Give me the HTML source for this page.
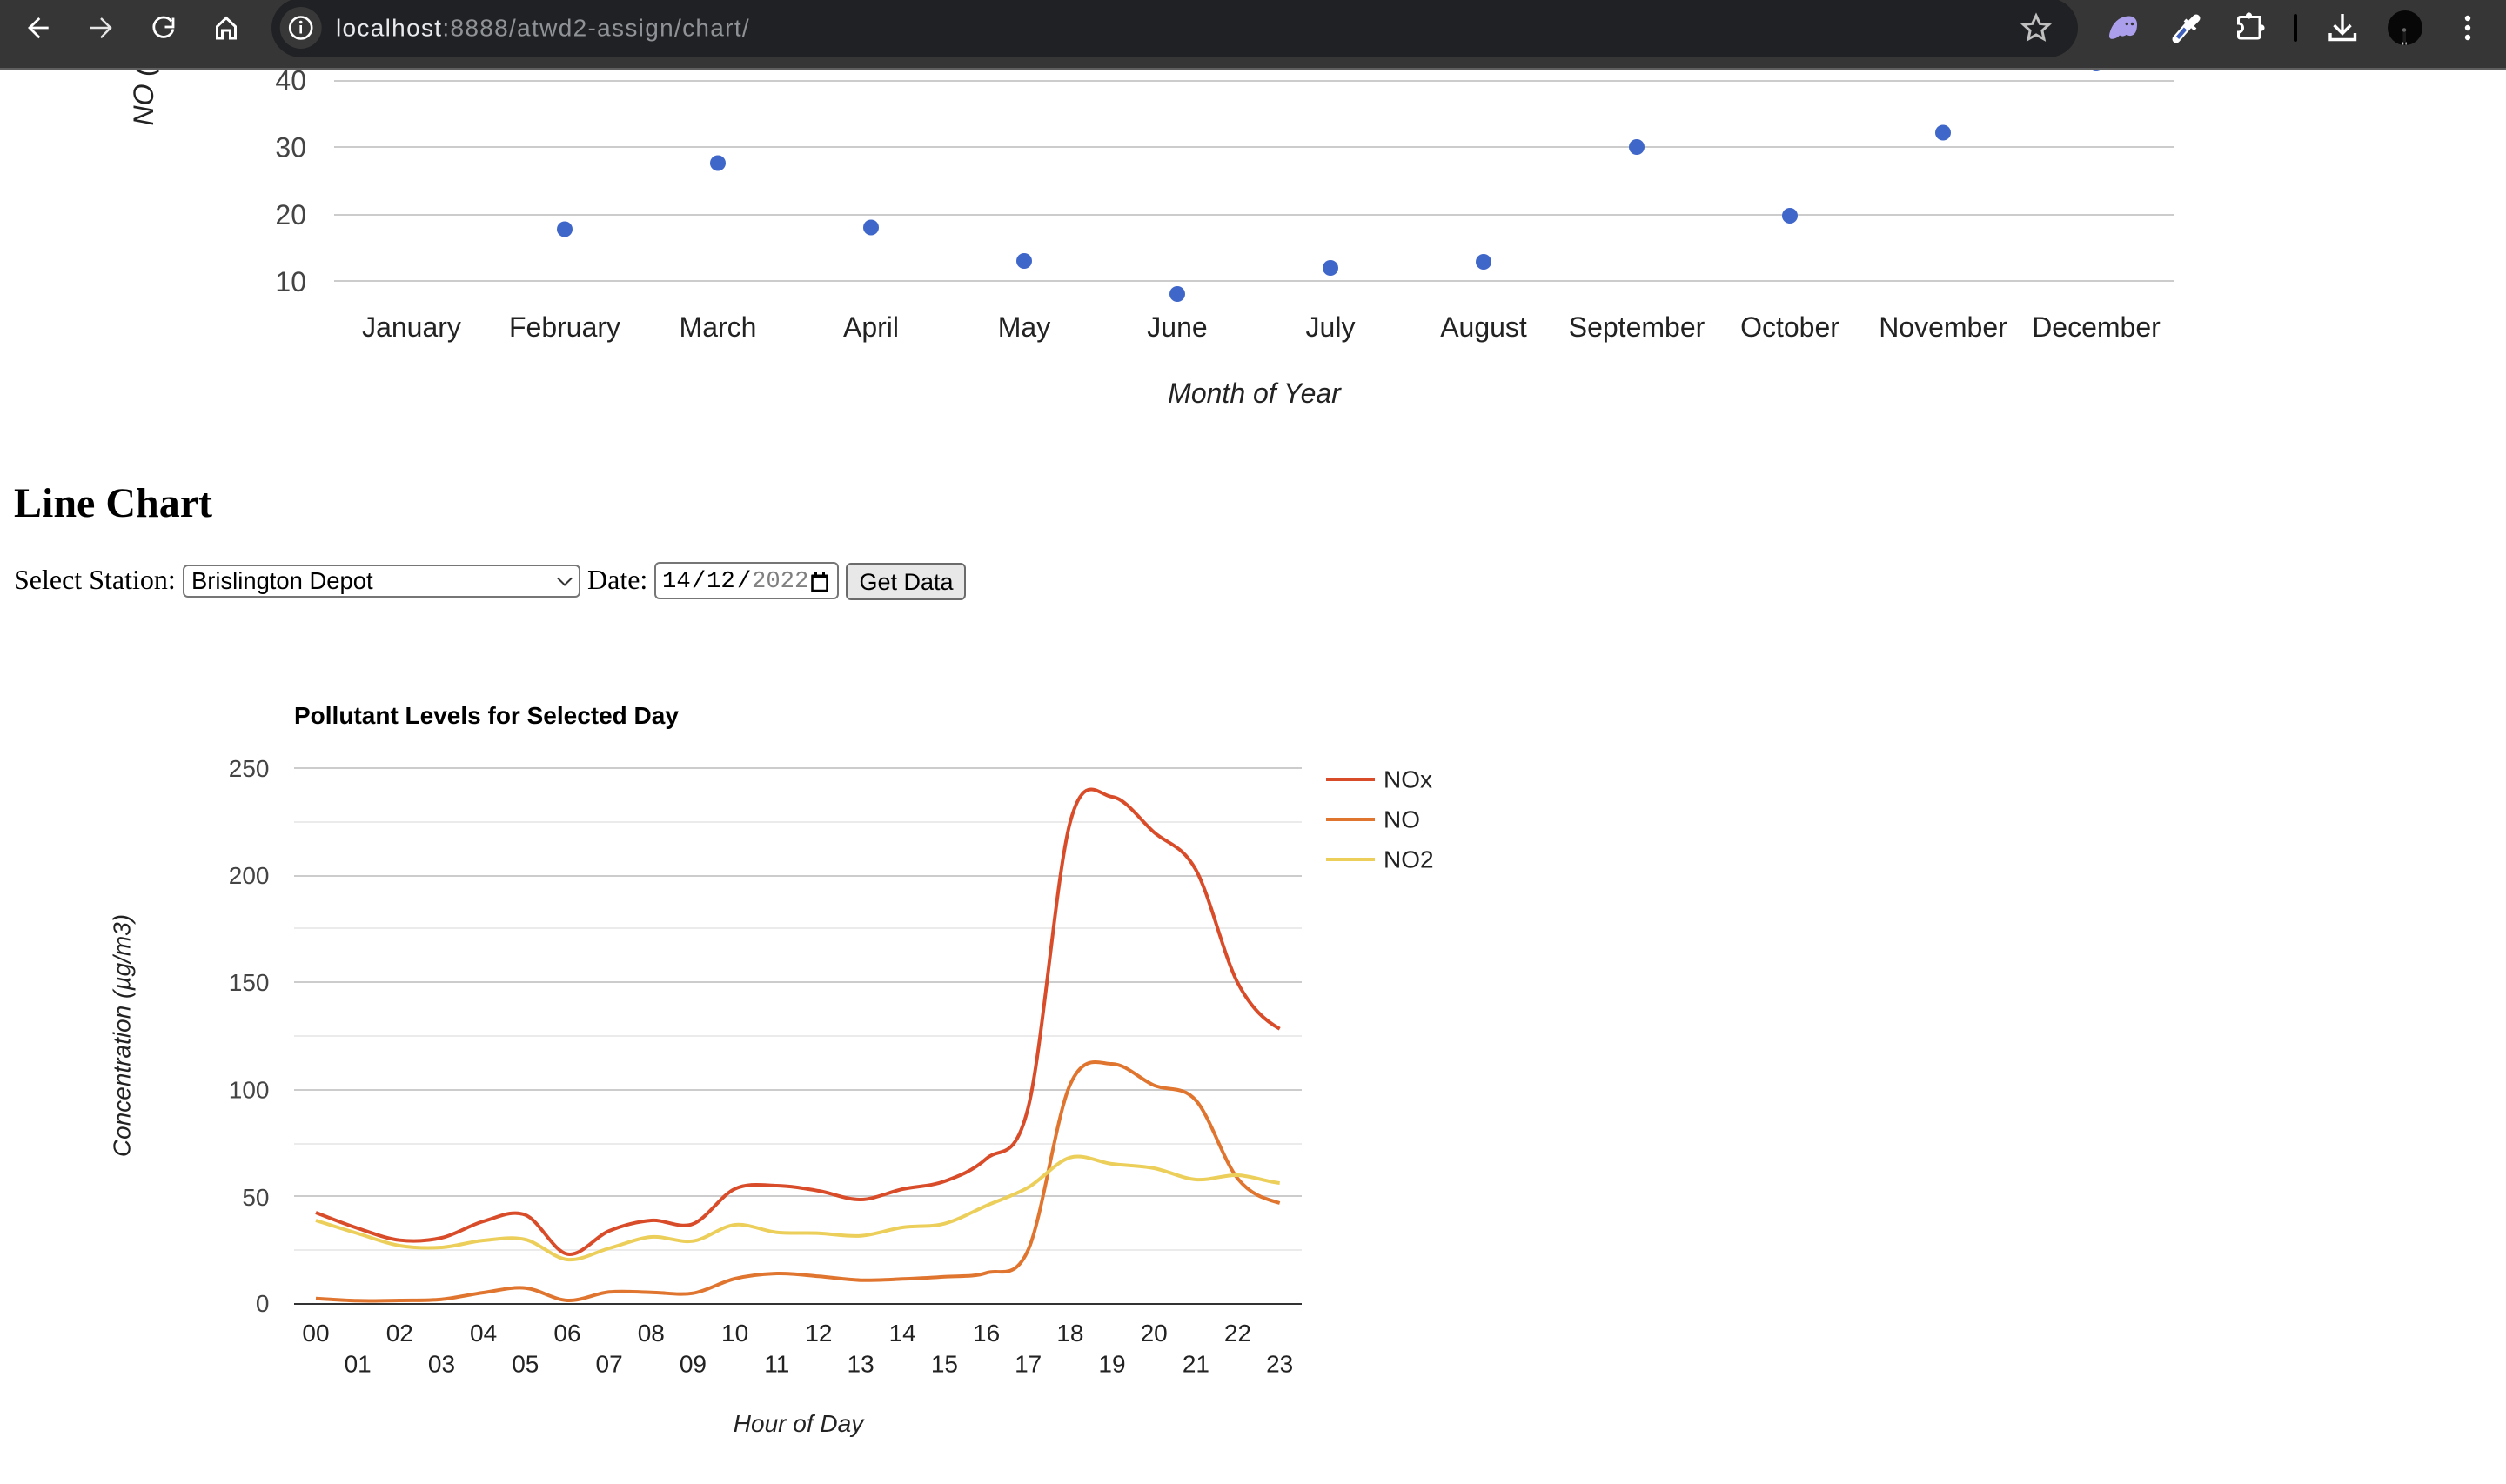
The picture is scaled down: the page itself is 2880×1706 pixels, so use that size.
<!DOCTYPE html>
<html lang="en">
<head>
<meta charset="utf-8">
<title>Chart</title>
<style>
html,body{margin:0;padding:0;background:#fff;}
body{position:relative;width:2880px;height:1706px;overflow:hidden;font-family:"Liberation Serif",serif;color:#000;}
svg{position:absolute;left:0;top:0;display:block;}
svg text{font-family:"Liberation Sans",Arial,sans-serif;}
h2{position:absolute;left:16px;top:555px;margin:0;font-size:48px;line-height:48px;font-weight:bold;white-space:nowrap;}
label{position:absolute;font-size:32px;line-height:32px;top:650px;white-space:nowrap;}
select{position:absolute;left:210px;top:649px;width:457px;height:38px;box-sizing:border-box;margin:0;padding:0 0 0 8px;border:2px solid #767676;border-radius:6px;background:#fff;color:#000;font:27.4px/34px "Liberation Sans",Arial,sans-serif;-webkit-appearance:none;appearance:none;outline:none;}
.date{position:absolute;left:752px;top:646px;width:212px;height:43px;box-sizing:border-box;border:2px solid #767676;border-radius:6px;background:#fff;}
.date span{position:absolute;top:6px;font:27.2px/30px "Liberation Mono",monospace;color:#000;}
button{position:absolute;left:972px;top:647px;width:138px;height:43px;box-sizing:border-box;margin:0;padding:0 0 0 1px;border:2px solid #6b6b6b;border-radius:6px;background:#e8e8e8;color:#000;font:27px/38px "Liberation Sans",Arial,sans-serif;}
</style>
</head>
<body>

<svg width="2880" height="1706" viewBox="0 0 2880 1706">
  <!-- Top scatter chart -->
  <g fill="#cccccc">
    <rect x="384" y="92" width="2114" height="2"/>
    <rect x="384" y="168" width="2114" height="2"/>
    <rect x="384" y="246" width="2114" height="2"/>
    <rect x="384" y="322" width="2114" height="2"/>
  </g>
  <g font-size="32" fill="#444444" text-anchor="end">
    <text x="352" y="103.5">40</text>
    <text x="352" y="180.5">30</text>
    <text x="352" y="258">20</text>
    <text x="352" y="335">10</text>
  </g>
  <text transform="translate(176 144.5) rotate(-90)" font-size="32" font-style="italic" fill="#222222">NO (µg/m3)</text>
  <g fill="#3f66c9">
    <circle cx="649" cy="263.5" r="9"/>
    <circle cx="825" cy="187.5" r="9"/>
    <circle cx="1001" cy="261.5" r="9"/>
    <circle cx="1177" cy="300" r="9"/>
    <circle cx="1353" cy="338" r="9"/>
    <circle cx="1529" cy="308" r="9"/>
    <circle cx="1705" cy="301" r="9"/>
    <circle cx="1881" cy="169" r="9"/>
    <circle cx="2057" cy="248" r="9"/>
    <circle cx="2233" cy="152.5" r="9"/>
    <circle cx="2409" cy="73" r="9"/>
  </g>
  <g font-size="32" fill="#222222" text-anchor="middle">
    <text x="473" y="387">January</text>
    <text x="649" y="387">February</text>
    <text x="825" y="387">March</text>
    <text x="1001" y="387">April</text>
    <text x="1177" y="387">May</text>
    <text x="1353" y="387">June</text>
    <text x="1529" y="387">July</text>
    <text x="1705" y="387">August</text>
    <text x="1881" y="387">September</text>
    <text x="2057" y="387">October</text>
    <text x="2233" y="387">November</text>
    <text x="2409" y="387">December</text>
  </g>
  <text x="1441.5" y="463" font-size="32" font-style="italic" fill="#222222" text-anchor="middle">Month of Year</text>

  <!-- Line chart -->
  <text x="338" y="832" font-size="28" font-weight="bold" fill="#000000">Pollutant Levels for Selected Day</text>
  <g fill="#ebebeb">
    <rect x="338" y="944" width="1158" height="2"/>
    <rect x="338" y="1066" width="1158" height="2"/>
    <rect x="338" y="1190" width="1158" height="2"/>
    <rect x="338" y="1314" width="1158" height="2"/>
    <rect x="338" y="1436" width="1158" height="2"/>
  </g>
  <g fill="#cccccc">
    <rect x="338" y="882" width="1158" height="2"/>
    <rect x="338" y="1006" width="1158" height="2"/>
    <rect x="338" y="1128" width="1158" height="2"/>
    <rect x="338" y="1252" width="1158" height="2"/>
    <rect x="338" y="1374" width="1158" height="2"/>
  </g>
  <rect x="338" y="1498" width="1158" height="2" fill="#333333"/>
  <g font-size="28" fill="#444444" text-anchor="end">
    <text x="309.5" y="893">250</text>
    <text x="309.5" y="1016">200</text>
    <text x="309.5" y="1139">150</text>
    <text x="309.5" y="1262.5">100</text>
    <text x="309.5" y="1386">50</text>
    <text x="309.5" y="1508">0</text>
  </g>
  <text transform="translate(149.5 1190.5) rotate(-90)" font-size="28" font-style="italic" fill="#222222" text-anchor="middle">Concentration (µg/m3)</text>

  <g fill="none" stroke-width="4" stroke-linejoin="round">
    <path stroke="#d94c2a" d="M363 1394S395.2 1406.7 411.2 1412S443.3 1423.9 459.3 1425.7S491.5 1426.6 507.5 1423S539.6 1408.4 555.6 1404S587.8 1390.4 603.8 1396.7S636 1438.7 652 1441.7S684.1 1421.5 700.1 1415S732.3 1404.3 748.3 1403S780.4 1413 796.4 1407S828.6 1374 844.6 1366.7S876.8 1362.6 892.8 1363S924.9 1366.3 940.9 1369S973.1 1379.3 989.1 1379S1021.2 1370.5 1037.2 1367S1069.4 1363.8 1085.4 1358S1117.6 1346.2 1133.6 1332S1165.7 1337.5 1181.7 1273S1213.9 1004.5 1229.9 945S1262 914 1278 916S1310.2 942.7 1326.2 956.7S1358.4 971.1 1374.4 1000S1406.5 1099.6 1422.5 1130S1454.7 1173.9 1470.7 1182.7"/>
    <path stroke="#e0752f" d="M363 1492.7S395.2 1494.9 411.2 1495.3S443.3 1495.3 459.3 1495S491.5 1495.2 507.5 1493.7S539.6 1488.2 555.6 1486S587.8 1479.2 603.8 1480.7S636 1494.2 652 1495S684.1 1486.9 700.1 1485.3S732.3 1485.5 748.3 1485.7S780.4 1489.3 796.4 1486.7S828.6 1473.8 844.6 1470S876.8 1464.5 892.8 1464S924.9 1466 940.9 1467.3S973.1 1471.2 989.1 1471.7S1021.2 1471 1037.2 1470.3S1069.4 1468.9 1085.4 1467.7S1117.6 1468.5 1133.6 1463.3S1165.7 1472.8 1181.7 1436.7S1213.9 1282.3 1229.9 1246.7S1262 1222.8 1278 1223S1310.2 1240.7 1326.2 1247.7S1358.4 1247.1 1374.4 1265S1406.5 1335.3 1422.5 1355S1454.7 1378.3 1470.7 1383"/>
    <path stroke="#eccf5a" d="M363 1403S395.2 1413.2 411.2 1418S443.3 1429.3 459.3 1432S491.5 1435 507.5 1434S539.6 1427.5 555.6 1426S587.8 1421.3 603.8 1425S636 1446.3 652 1448S684.1 1439.3 700.1 1435S732.3 1423.4 748.3 1422S780.4 1429 796.4 1426.7S828.6 1409.7 844.6 1408S876.8 1415.1 892.8 1416.7S924.9 1417 940.9 1417.7S973.1 1421.8 989.1 1420.7S1021.2 1413.3 1037.2 1411S1069.4 1410.9 1085.4 1406.7S1117.6 1393 1133.6 1386S1165.7 1374.2 1181.7 1365S1213.9 1335.2 1229.9 1330.7S1262 1336 1278 1338S1310.2 1340 1326.2 1343S1358.4 1354.7 1374.4 1356S1406.5 1350.3 1422.5 1351S1454.7 1358.5 1470.7 1360"/>
  </g>

  <g font-size="28" fill="#222222" text-anchor="middle">
    <text x="363" y="1542">00</text>
    <text x="459.3" y="1542">02</text>
    <text x="555.6" y="1542">04</text>
    <text x="652" y="1542">06</text>
    <text x="748.3" y="1542">08</text>
    <text x="844.6" y="1542">10</text>
    <text x="940.9" y="1542">12</text>
    <text x="1037.2" y="1542">14</text>
    <text x="1133.6" y="1542">16</text>
    <text x="1229.9" y="1542">18</text>
    <text x="1326.2" y="1542">20</text>
    <text x="1422.5" y="1542">22</text>
    <text x="411.2" y="1577.5">01</text>
    <text x="507.5" y="1577.5">03</text>
    <text x="603.8" y="1577.5">05</text>
    <text x="700.1" y="1577.5">07</text>
    <text x="796.4" y="1577.5">09</text>
    <text x="892.8" y="1577.5">11</text>
    <text x="989.1" y="1577.5">13</text>
    <text x="1085.4" y="1577.5">15</text>
    <text x="1181.7" y="1577.5">17</text>
    <text x="1278" y="1577.5">19</text>
    <text x="1374.4" y="1577.5">21</text>
    <text x="1470.7" y="1577.5">23</text>
  </g>
  <text x="917.5" y="1646" font-size="28" font-style="italic" fill="#222222" text-anchor="middle">Hour of Day</text>

  <!-- Legend -->
  <rect x="1524" y="894" width="56" height="4" fill="#d94c2a"/>
  <rect x="1524" y="940" width="56" height="4" fill="#e0752f"/>
  <rect x="1524" y="986" width="56" height="4" fill="#eccf5a"/>
  <g font-size="28" fill="#222222">
    <text x="1590" y="905.7">NOx</text>
    <text x="1590" y="951.7">NO</text>
    <text x="1590" y="997.7">NO2</text>
  </g>
</svg>

<h2>Line Chart</h2>
<label style="left:16px">Select Station:</label>
<select><option>Brislington Depot</option></select>
<svg style="left:636px;top:660px" width="26" height="16" viewBox="0 0 26 16"><path d="M5 4.5L13 12.5L21 4.5" fill="none" stroke="#333" stroke-width="2"/></svg>
<label style="left:675px">Date:</label>
<div class="date">
  <span style="left:7px">14</span>
  <span style="left:41px">/</span>
  <span style="left:58px">12</span>
  <span style="left:93px">/</span>
  <span style="left:110px;color:#808080">2022</span>
  <svg style="left:176px;top:8px" width="24" height="26" viewBox="0 0 24 26"><path d="M3.500 6.500H20.500V23H3.500Z" fill="none" stroke="#000" stroke-width="2.600"/><rect x="2.500" y="4.500" width="19" height="3.500" fill="#000"/><rect x="6" y="1.500" width="3" height="3.500" fill="#000"/><rect x="15" y="1.500" width="3" height="3.500" fill="#000"/></svg>
</div>
<button>Get Data</button>

<!-- Browser toolbar -->
<svg width="2880" height="80" viewBox="0 0 2880 80">
  <rect width="2880" height="78" fill="#363636"/>
  <rect y="78" width="2880" height="2" fill="#5f5f5f"/>
  <rect x="312" y="-2" width="2076" height="68" rx="34" fill="#202124"/>
  <circle cx="345.7" cy="32" r="24" fill="#383838"/>
  <circle cx="345.7" cy="32" r="12.5" fill="none" stroke="#fff" stroke-width="2.6"/>
  <circle cx="345.7" cy="25.5" r="1.8" fill="#fff"/>
  <rect x="344.4" y="29" width="2.6" height="9.5" fill="#fff"/>

  <g fill="none" stroke="#fff" stroke-width="2.8">
    <path d="M55.7 32H34M45.3 21L34 32L45.3 43.3"/>
    <path d="M104 32H126M116 21L127 32L116 43.3" stroke="#e6e6e6" stroke-width="2.4"/>
    <path d="M197 24.5A11.2 11.2 0 1 0 199 33.5"/>
    <path d="M199 20.5V31H189.5"/>
    <path d="M249.5 44V30.5L260 20.7L270.5 30.5V44H264.5V35H255.5V44Z" stroke-width="3"/>
    <polygon points="2340,18 2344.3,27.3 2354.5,28.4 2346.9,35.2 2349,45 2340,40 2331,45 2333.1,35.2 2325.5,28.4 2335.7,27.3" stroke="#c0c0c0" stroke-width="3" stroke-linejoin="miter"/>
  </g>

  <text x="386" y="41.5" font-size="28" letter-spacing="1.32" fill="#e8eaed">localhost<tspan fill="#8f9296">:8888/atwd2-assign/chart/</tspan></text>

  <!-- Ghost extension -->
  <path d="M2447 18.5C2453 18.5 2456 23 2456 28C2456 34 2454.5 40 2449 41C2446 41.5 2445 40 2443.5 40C2441 42 2438 42 2436 40.5C2433 44 2428 45.5 2425.5 44.5C2423 43 2424 38.5 2426 33.5C2429 26 2436 18.5 2447 18.5Z" fill="#ab9eea"/>
  <circle cx="2444.3" cy="27.5" r="1.7" fill="#333"/>
  <circle cx="2450.5" cy="27.5" r="1.7" fill="#333"/>

  <!-- Dropper -->
  <path d="M2501 45L2515 29" stroke="#fff" stroke-width="9" stroke-linecap="round" fill="none"/>
  <path d="M2502.5 43.5L2511.5 33" stroke="#3f5fbd" stroke-width="4.5" stroke-linecap="butt" fill="none"/>
  <path d="M2511 23L2523 34" stroke="#fff" stroke-width="4" fill="none"/>
  <path d="M2518 27L2524 21" stroke="#fff" stroke-width="9" stroke-linecap="round" fill="none"/>

  <!-- Puzzle -->
  <path d="M2575 19.5H2597V41.5Q2597 44 2594.5 44H2575Q2572.5 44 2572.5 41.5V37A5 5 0 0 0 2572.5 27V22Q2572.5 19.5 2575 19.5Z" fill="none" stroke="#fff" stroke-width="3"/>
  <circle cx="2584.5" cy="18" r="3.6" fill="#fff"/>
  <circle cx="2599" cy="32" r="3.6" fill="#fff"/>

  <rect x="2636" y="16" width="4" height="32" rx="2" fill="#000"/>

  <!-- Download -->
  <path d="M2692 16V38M2682.5 29L2692 38.5L2701.5 29M2678 38V45.5H2706.5V38" fill="none" stroke="#fff" stroke-width="3.4"/>

  <!-- Avatar -->
  <circle cx="2764" cy="32" r="20" fill="#070707"/>
  <circle cx="2763" cy="34.5" r="2.3" fill="#666"/>
  <rect x="2761.5" y="37" width="3.5" height="11" fill="#1c1c1c"/>
  <rect x="2761" y="48.5" width="1.3" height="3" fill="#ccc"/>
  <rect x="2764.5" y="48.5" width="1.3" height="3" fill="#ccc"/>

  <g fill="#fff">
    <circle cx="2836" cy="21" r="3.2"/>
    <circle cx="2836" cy="32" r="3.2"/>
    <circle cx="2836" cy="43" r="3.2"/>
  </g>
</svg>
</body>
</html>
